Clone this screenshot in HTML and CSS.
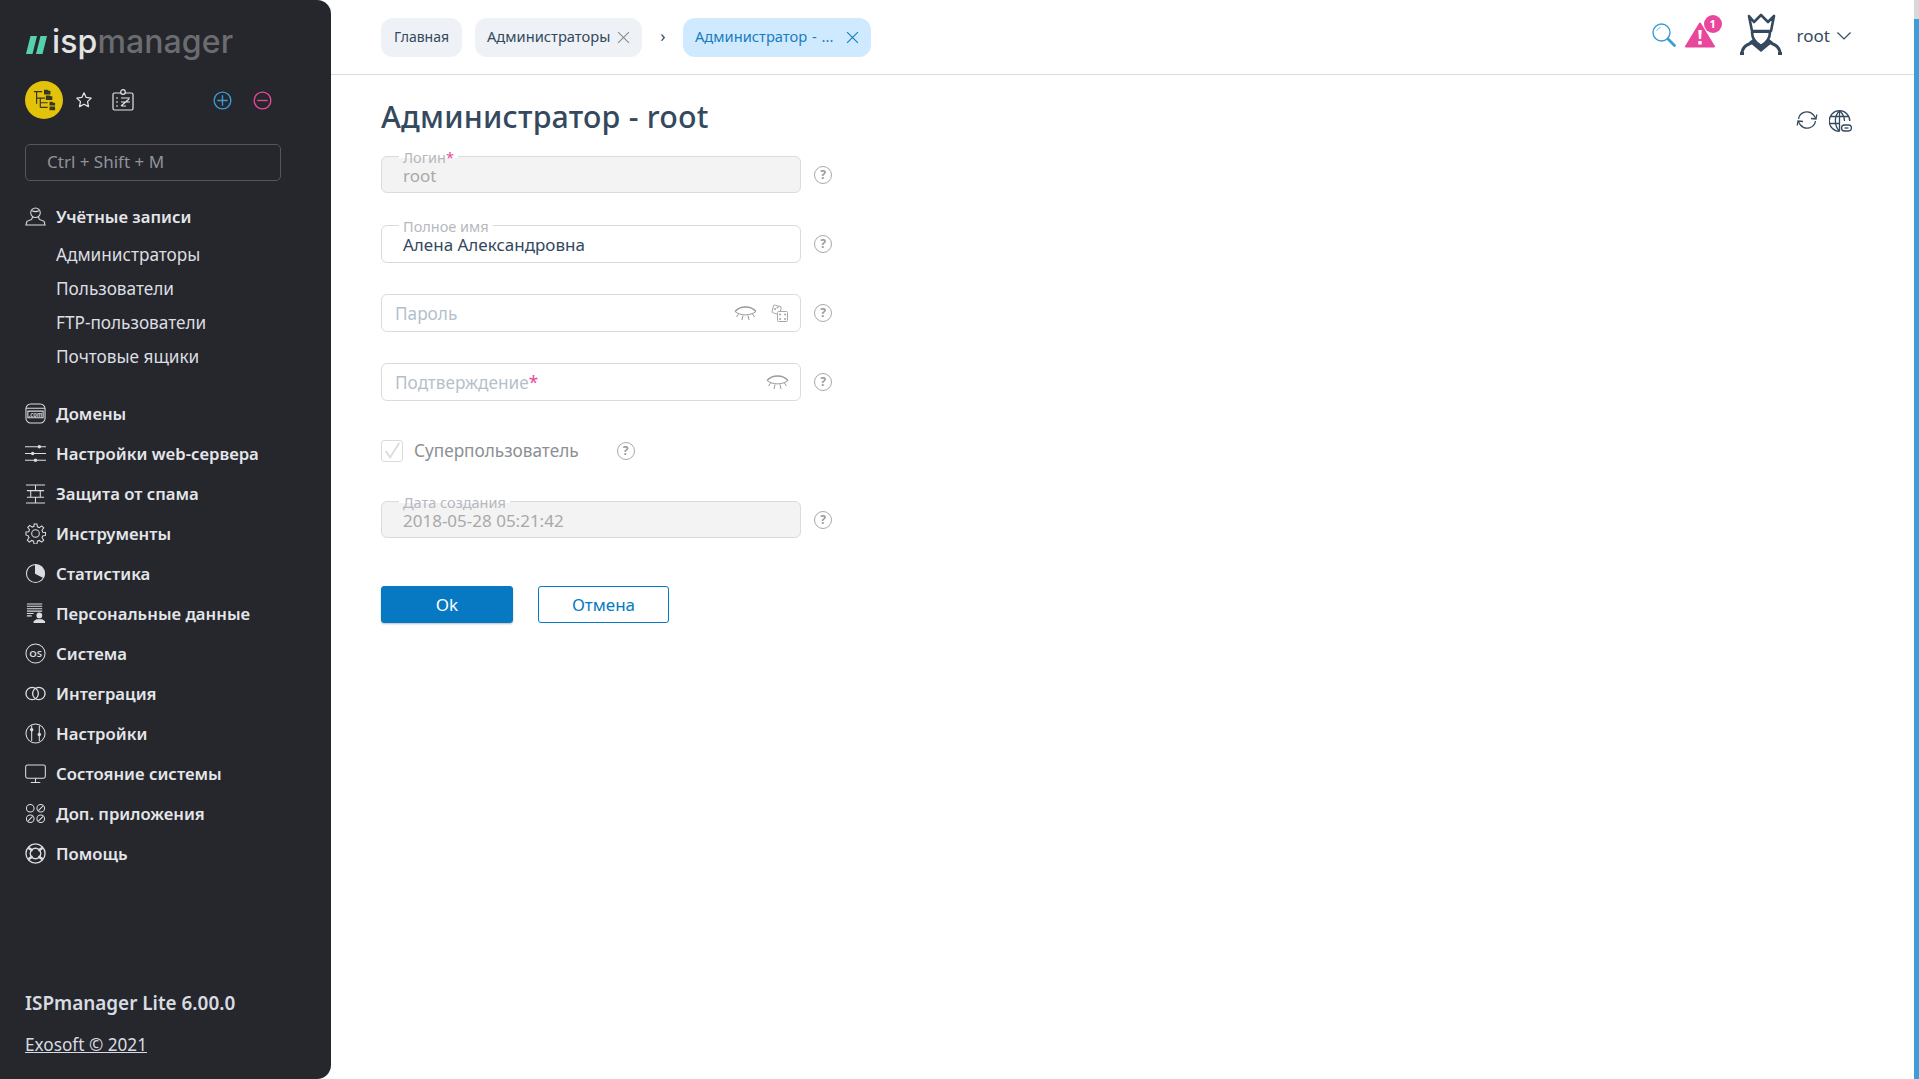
FILE: index.html
```html
<!DOCTYPE html>
<html lang="ru">
<head>
<meta charset="utf-8">
<title>ISPmanager</title>
<link rel="stylesheet" href="styles.css">
</head>
<body>
<div class="app">
  <aside class="sidebar">
    <div class="logo">
      <svg class="logo-mark" viewBox="0 0 21 18"><path d="M4.500 0h6.500L6.500 18H0zM14.500 0H21l-4.500 18H10z" fill="#55d2ac"/></svg>
      <span class="logo-isp">isp</span><span class="logo-mgr">manager</span>
    </div>
    <div class="tools">
      <span class="tool-main">
        <svg viewBox="0 0 26 26" width="24" height="24" fill="none" stroke="#3a3520" stroke-width="1.300"><path d="M2 4h9M5 4v13M5 11h9M9 11v10M9 16h8M9 21h8"/><path d="M13 2h4l1 1h2v4h-7zM15 8h4l1 1h2v4h-7zM19 15h3l1 1h2v3h-6zM19 20h6v4h-6z" fill="#3a3520" stroke="none"/></svg>
      </span>
      <svg class="tool-star" viewBox="0 0 20 20" width="18" height="18" fill="none" stroke="#e5e5e5" stroke-width="1.400"><path d="M10 2l2.400 5.200 5.600.7-4.100 3.900 1.100 5.600L10 14.700l-5 2.700 1.100-5.600L2 7.900l5.600-.7z" stroke-linejoin="round"/></svg>
      <svg class="tool-card" viewBox="0 0 22 22" width="22" height="22" fill="none" stroke="#e5e5e5" stroke-width="1.200"><rect x="1" y="4" width="20" height="17" rx="1.500"/><circle cx="11" cy="3" r="2.300" fill="#26272c"/><path d="M4 9h2M4 13h2M4 17h2M9 9h9M9 13h9M9 17h5M9 17l8-7"/></svg>
      <span class="tool-gap"></span>
      <svg class="tool-round" viewBox="0 0 20 20" width="19" height="19" fill="none" stroke="#3a9bd5" stroke-width="1.400"><circle cx="10" cy="10" r="8.800"/><path d="M10 4.500v11M4.500 10h11"/></svg>
      <svg class="tool-round" viewBox="0 0 20 20" width="19" height="19" fill="none" stroke="#e8479b" stroke-width="1.400"><circle cx="10" cy="10" r="8.800"/><path d="M4.500 10h11"/></svg>
    </div>
    <div class="side-search">Ctrl + Shift + M</div>

    <nav class="menu">
      <div class="menu-group">
        <div class="menu-item">
          <svg class="mi" viewBox="0 0 22 22"><circle cx="11" cy="7" r="5"/><path d="M7.500 5c2 1 5 1 7 0M8 11l-1 3-5 2-1 4h20l-1-4-5-2-1-3"/></svg>
          <span>Учётные записи</span>
        </div>
        <div class="submenu">
          <a>Администраторы</a>
          <a>Пользователи</a>
          <a>FTP-пользователи</a>
          <a>Почтовые ящики</a>
        </div>
      </div>
      <div class="menu-item"><svg class="mi" viewBox="0 0 22 22"><rect x="1" y="1" width="20" height="20" rx="5"/><path d="M1 5.500h20M3 8.500h16v7H3z"/><text x="11" y="14.500" class="mi-com">.com</text></svg><span>Домены</span></div>
      <div class="menu-item"><svg class="mi" viewBox="0 0 22 22"><path d="M0 4h22M0 11h22M0 18h22"/><circle cx="15" cy="4" r="1.800" class="fill"/><circle cx="8" cy="11" r="1.800" class="fill"/><circle cx="11" cy="18" r="1.800" class="fill"/></svg><span>Настройки web-сервера</span></div>
      <div class="menu-item"><svg class="mi" viewBox="0 0 22 22"><path d="M1 2h20M2 8h18M2 15h18M1 21h20M11 2v6M6 8v7M16 8v7M11 15v6"/></svg><span>Защита от спама</span></div>
      <div class="menu-item"><svg class="mi" viewBox="0 0 22 22"><circle cx="11" cy="11" r="4"/><path d="M9.500 1h3l.5 3 2 .8 2.500-1.800 2.100 2.100-1.800 2.500.8 2 2.900.4v3l-2.900.5-.8 2 1.800 2.500-2.100 2.100-2.500-1.800-2 .8-.5 2.900h-3l-.5-2.900-2-.8-2.500 1.800-2.100-2.100 1.800-2.500-.8-2L1 12.500v-3l2.900-.4.8-2-1.800-2.500 2.100-2.100 2.500 1.800 2-.8z"/></svg><span>Инструменты</span></div>
      <div class="menu-item"><svg class="mi" viewBox="0 0 22 22"><circle cx="11" cy="11" r="9.500"/><path d="M11 1.500a9.500 9.500 0 0 1 8.500 13.700L11 11z" class="fill"/><path d="M11 1.500V11l8.500 4.200"/></svg><span>Статистика</span></div>
      <div class="menu-item"><svg class="mi" viewBox="0 0 22 22"><path d="M2 1h16M2 3.500h16M2 6h16M2 8.500h16M2 11h7M2 13.500h5"/><circle cx="15" cy="13" r="3" class="fill"/><path d="M9 21v-2l3-2h6l3 2v2z" class="fill"/></svg><span>Персональные данные</span></div>
      <div class="menu-item"><svg class="mi" viewBox="0 0 22 22"><circle cx="11" cy="11" r="10"/><text x="11" y="14.500" class="mi-os">OS</text></svg><span>Система</span></div>
      <div class="menu-item"><svg class="mi" viewBox="0 0 22 22"><circle cx="7.500" cy="11" r="6.500" stroke-width="1.400"/><circle cx="14.500" cy="11" r="6.500" stroke-width="1.400"/></svg><span>Интеграция</span></div>
      <div class="menu-item"><svg class="mi" viewBox="0 0 22 22"><circle cx="11" cy="11" r="10"/><path d="M7 3v16M15 3v16"/><circle cx="7" cy="7" r="1.800" class="fill"/><circle cx="15" cy="12" r="1.800" class="fill"/></svg><span>Настройки</span></div>
      <div class="menu-item"><svg class="mi" viewBox="0 0 22 22"><rect x="0.700" y="2" width="20.600" height="14" rx="2"/><path d="M11 16v4M6 20.500h10"/></svg><span>Состояние системы</span></div>
      <div class="menu-item"><svg class="mi" viewBox="0 0 22 22"><circle cx="5.500" cy="5.500" r="4"/><circle cx="16.500" cy="5.500" r="4"/><circle cx="5.500" cy="16.500" r="4"/><circle cx="16.500" cy="16.500" r="4"/><path d="M14 8l5-5M3 19l5-5M14 19l5-5"/></svg><span>Доп. приложения</span></div>
      <div class="menu-item"><svg class="mi" viewBox="0 0 22 22"><circle cx="11" cy="11" r="10" stroke-width="1.400"/><circle cx="11" cy="11" r="5.500" stroke-width="1.400"/><path d="M3.500 5l4.500 3M18.500 5l-4.500 3M3.500 17l4.500-3M18.500 17l-4.500-3" stroke-width="2.600"/></svg><span>Помощь</span></div>
    </nav>

    <div class="side-foot">
      <div class="version">ISPmanager Lite 6.00.0</div>
      <a class="copyright">Exosoft © 2021</a>
    </div>
  </aside>

  <main class="main">
    <header class="topbar">
      <div class="tabs">
        <span class="tab tab-home">Главная</span>
        <span class="tab tab-close">Администраторы
          <svg class="x" viewBox="0 0 12 12"><path d="M1 1l10 10M11 1L1 11"/></svg>
        </span>
        <span class="crumb-sep">›</span>
        <span class="tab tab-active">Администратор - ...
          <svg class="x" viewBox="0 0 12 12"><path d="M1 1l10 10M11 1L1 11"/></svg>
        </span>
      </div>
      <div class="top-right">
        <svg class="t-search" viewBox="0 0 24 24" width="24" height="24" fill="none" stroke="#3a9bd5"><circle cx="9.500" cy="9.500" r="8.500" stroke-width="1.400"/><path d="M4.500 8a5.500 5.500 0 0 1 4-3.500" stroke-width="1" opacity=".6"/><path d="M16 16l6.500 6.500" stroke-width="2.800" stroke-linecap="round"/></svg>
        <span class="alert">
          <svg viewBox="0 0 30 26" width="30" height="26"><path d="M15 1.500L29 24.500H1z" fill="#e8479b" stroke="#e8479b" stroke-width="2" stroke-linejoin="round"/><path d="M13.300 8h3.400l-.6 9h-2.200zM13.300 19h3.400v3.500h-3.400z" fill="#fff"/></svg>
          <b class="badge">1</b>
        </span>
        <svg class="avatar" viewBox="0 0 50 48" width="50" height="48" fill="none" stroke="#34495e" stroke-width="2.600"><path d="M13 6l5 6 7-7 7 7 6-6-3 15H16z" stroke-linejoin="round"/><path d="M15 21.500h20" stroke-width="3"/><path d="M16 22c0 6 2 10 9 14 7-4 9-8 9-14"/><path d="M17 29l8 6 8-6 4 3-12 10-12-10z" fill="#34495e" stroke="none"/><path d="M6 44c0-6 3-9 12-12M44 44c0-6-3-9-12-12M4 43.500h4M42 43.500h4" stroke-width="3"/></svg>
        <span class="user">root</span>
        <svg class="chev" viewBox="0 0 14 8" width="14" height="8" fill="none" stroke="#34495e" stroke-width="1.200"><path d="M.5.500L7 7 13.500.5"/></svg>
      </div>
    </header>

    <section class="content">
      <div class="title-row">
        <h1>Администратор - root</h1>
        <div class="title-icons">
          <svg viewBox="0 0 22 20" width="22" height="20" fill="none" stroke="#34495e" stroke-width="1.300"><path d="M2.500 9a8.500 8.500 0 0 1 15-4l2 3M19.500 11a8.500 8.500 0 0 1-15 4l-2-3"/><path d="M15 8.500l5 .5.800-4.500M7 11.500l-5-.5-.8 4.500"/></svg>
          <svg viewBox="0 0 23 22" width="23" height="22" fill="none" stroke="#34495e" stroke-width="1.300"><path d="M10.500 21.300a10.300 10.300 0 1 1 10.300-10.300"/><path d="M10.500.7c-5.500 5-5.500 15 0 20.600M10.500.7c4 3.500 5 7.500 5 10.300M10.500.7v20.600M2 6.500h17M1 13.500h9.500"/><rect x="12.500" y="15" width="10" height="6" rx="3" fill="#fff"/><path d="M15.500 18h4"/></svg>
        </div>
      </div>

      <form class="form">
        <div class="row">
          <div class="field field-off"><span class="legend">Логин<i>*</i></span><span class="val">root</span></div>
          <span class="q">?</span>
        </div>
        <div class="row">
          <div class="field"><span class="legend">Полное имя</span><span class="val val-dark">Алена Александровна</span></div>
          <span class="q">?</span>
        </div>
        <div class="row">
          <div class="field field-ph"><span class="ph">Пароль</span>
            <svg class="eye" viewBox="0 0 23 15"><path d="M1 5.500c5-6 16-6 21 0" stroke-width="1.300"/><path d="M1 5.500c6 4.500 15 4.500 21 0M4.500 8l-2 3M9 9.500l-1 4.500M14 9.500l1 4.500M18.500 8l2 3"/></svg>
            <svg class="dice" viewBox="0 0 17 18"><rect x="1.500" y="1.500" width="8" height="8" rx="1.500" transform="rotate(15 5 6)"/><rect x="6.500" y="7.500" width="10" height="10" rx="1" fill="#fff"/><path d="M9 10.500h.1M14 10.500h.1M9 15h.1M14 15h.1M4 5h.1M6.500 3.500h.1" stroke-width="2" stroke-linecap="round"/></svg>
          </div>
          <span class="q">?</span>
        </div>
        <div class="row">
          <div class="field field-ph"><span class="ph">Подтверждение<i>*</i></span>
            <svg class="eye eye-solo" viewBox="0 0 23 15"><path d="M1 5.500c5-6 16-6 21 0" stroke-width="1.300"/><path d="M1 5.500c6 4.500 15 4.500 21 0M4.500 8l-2 3M9 9.500l-1 4.500M14 9.500l1 4.500M18.500 8l2 3"/></svg>
          </div>
          <span class="q">?</span>
        </div>
        <div class="row row-check">
          <span class="check"><svg viewBox="0 0 22 22" width="20" height="20" fill="none" stroke="#dcdcdc" stroke-width="2"><path d="M4 11l5 7L19 2"/></svg></span>
          <span class="check-label">Суперпользователь</span>
          <span class="q q-check">?</span>
        </div>
        <div class="row">
          <div class="field field-off"><span class="legend">Дата создания</span><span class="val">2018-05-28 05:21:42</span></div>
          <span class="q">?</span>
        </div>
        <div class="buttons">
          <span class="btn btn-ok">Ok</span>
          <span class="btn btn-cancel">Отмена</span>
        </div>
      </form>
    </section>
  </main>
  <div class="scroll"><div class="scroll-thumb"></div></div>
</div>
</body>
</html>
```
FILE: styles.css
```css
* { box-sizing: border-box; }
html, body { margin: 0; height: 100%; overflow: hidden; }
body { font-family: "Noto Sans", "Open Sans", sans-serif; background: #fff; color: #34495e; }
.app { display: flex; height: 1079px; }

.sidebar { width: 331px; flex: none; background: #26272c; border-radius: 0 14px 14px 0; padding: 0 25px; display: flex; flex-direction: column; color: #e4e6ea; }
.logo { height: 80px; padding-top: 4px; display: flex; align-items: center; font-family: "Inter", "Noto Sans", sans-serif; font-size: 32px; font-weight: 500; line-height: 40px; letter-spacing: .1px; }
.logo-mark { width: 21px; height: 18px; margin: 5px 5px 0 1px; flex: none; }
.logo-isp { color: #e3e3e3; }
.logo-mgr { color: #6b6c70; }
.tools { height: 38px; margin-top: 1px; display: flex; align-items: center; }
.tool-main { width: 38px; height: 38px; border-radius: 50%; background: #e3c20c; display: flex; align-items: center; justify-content: center; }
.tool-star { margin-left: 12px; }
.tool-card { margin-left: 19px; }
.tool-gap { width: 79px; }
.tool-round { margin-right: 21px; }
.side-search { width: 256px; height: 37px; margin-top: 25px; padding-left: 21px; border: 1px solid #55565b; border-radius: 5px; font-size: 17px; line-height: 34px; color: #8f939a; }

.menu { margin-top: 15px; }
.menu-group { margin-bottom: 19px; }
.menu-item { height: 40px; display: flex; align-items: center; gap: 10px; font-size: 16.7px; font-weight: 600; color: #e4e6ea; white-space: nowrap; }
.mi { width: 21px; height: 21px; flex: none; fill: none; stroke: #dcdde0; stroke-width: 1.1; }
.mi .fill { fill: #dcdde0; stroke: none; }
.mi-os { font-family: "Noto Sans", sans-serif; font-size: 10px; text-anchor: middle; fill: #dcdde0; stroke: none; }
.mi-com { font-family: "Noto Sans", sans-serif; font-size: 6.5px; font-style: italic; text-anchor: middle; fill: #dcdde0; stroke: none; }
.submenu { padding-left: 31px; padding-top: 2px; display: flex; flex-direction: column; }
.submenu a { height: 34px; font-size: 17.2px; line-height: 34px; color: #dcdee2; }
.side-foot { margin-top: auto; padding-bottom: 23px; }
.version { font-size: 18.9px; font-weight: 600; line-height: 24px; color: #d8dce2; }
.copyright { display: inline-block; margin-top: 19px; font-size: 17.2px; line-height: 22px; color: #d8dce2; text-decoration: underline; }

.main { flex: 1; min-width: 0; display: flex; flex-direction: column; }
.topbar { height: 75px; flex: none; border-bottom: 1px solid #dcdcdc; padding: 18px 68px 0 50px; display: flex; justify-content: space-between; }
.tabs { display: flex; align-items: flex-start; }
.tab { height: 39px; padding: 0 12px 2px; margin-right: 13px; border-radius: 12px; background: #eef2f6; font-size: 14.7px; line-height: 37px; color: #34495e; display: flex; align-items: center; gap: 6px; white-space: nowrap; }
.tab-home { width: 81px; justify-content: center; padding: 0 0 2px; font-size: 14px; }
.tab-close { width: 167px; justify-content: space-between; margin-right: 0; }
.tab-active { width: 188px; justify-content: space-between; background: #cfeaff; color: #1a7cc0; margin-right: 0; word-spacing: 1px; }
.crumb-sep { width: 41px; padding-left: 1px; text-align: center; font-size: 17px; line-height: 36px; }
.x { width: 13px; height: 13px; fill: none; stroke: #8b8f94; stroke-width: 1.1; flex: none; margin-top: 2px; }
.tab-active .x { stroke: #1a7cc0; }
.top-right { display: flex; align-items: flex-start; }
.t-search { margin-top: 5px; }
.alert { position: relative; margin-left: 9px; margin-top: 4px; width: 30px; height: 26px; }
.alert svg { display: block; }
.badge { position: absolute; top: -7px; right: -7px; width: 18px; height: 18px; border-radius: 50%; background: #e8479b; color: #fff; font-size: 11px; line-height: 18px; text-align: center; }
.avatar { margin-left: 21px; margin-top: -8px; }
.user { margin-left: 11px; font-size: 17px; line-height: 35px; }
.chev { margin-left: 7px; margin-top: 14px; }

.content { padding: 0 67px 0 50px; }
.title-row { display: flex; justify-content: space-between; height: 81px; }
h1 { margin: 0; padding-top: 21px; font-size: 30.4px; line-height: 41px; font-weight: 500; color: #34495e; letter-spacing: .2px; }
.title-icons { display: flex; gap: 11px; align-items: flex-start; padding-top: 35px; }
.form { display: flex; flex-direction: column; }
.row { display: flex; align-items: center; height: 38px; margin-bottom: 31px; }
.field { position: relative; width: 420px; height: 38px; border: 1px solid #dbdbdb; border-radius: 6px; display: flex; align-items: center; background: #fff; }
.field-off { background: #f3f3f3; height: 37px; margin-bottom: 1px; }
.legend { position: absolute; left: 17px; top: -7px; padding: 0 4px; background: #fff; font-size: 14.5px; line-height: 15px; color: #b5b8be; }
.legend i, .ph i { color: #e8479b; font-style: normal; }
.field-off .legend { background: linear-gradient(#fff 50%, #f3f3f3 50%); }
.val { padding-left: 21px; padding-top: 2px; font-size: 17px; line-height: 20px; color: #a9a9a9; }
.val-dark { color: #34495e; }
.field-ph { padding-left: 13px; }
.ph { font-size: 17.2px; color: #b4bfcb; flex: 1; }
.eye { width: 23px; height: 15px; flex: none; fill: none; stroke: #9a9a9a; stroke-width: 1; }
.eye-solo { margin-right: 11px; }
.dice { width: 17px; height: 18px; flex: none; margin: 0 12px 0 14px; fill: none; stroke: #a8a8a8; stroke-width: 1; }
.q { width: 18px; height: 18px; margin-left: 13px; border: 1px solid #a9a9a9; border-radius: 50%; font-size: 12px; font-weight: 700; line-height: 16px; text-align: center; color: #9a9a9a; flex: none; }
.check { width: 22px; height: 22px; border: 1px solid #dbdbdb; border-radius: 3px; display: flex; align-items: center; justify-content: center; background: #fff; }
.check-label { margin-left: 11px; padding-bottom: 2px; font-size: 17.2px; color: #8c8f94; }
.q-check { margin-left: 38px; }
.buttons { display: flex; gap: 25px; margin-top: 16px; }
.btn { width: 132px; height: 37px; border-radius: 3px; font-size: 17px; line-height: 35px; text-align: center; border: 1px solid #0679c2; }
.btn-ok { background: #0679c2; color: #fff; box-shadow: 0 1px 2px rgba(0,0,0,.25); }
.btn-cancel { color: #0679c2; background: #fff; width: 131px; }

.scroll { position: absolute; top: 0; right: 0; width: 5px; height: 1079px; background: #d8d8d8; }
.scroll-thumb { margin-top: 19px; height: 1060px; background: #3d9ddb; }
```
